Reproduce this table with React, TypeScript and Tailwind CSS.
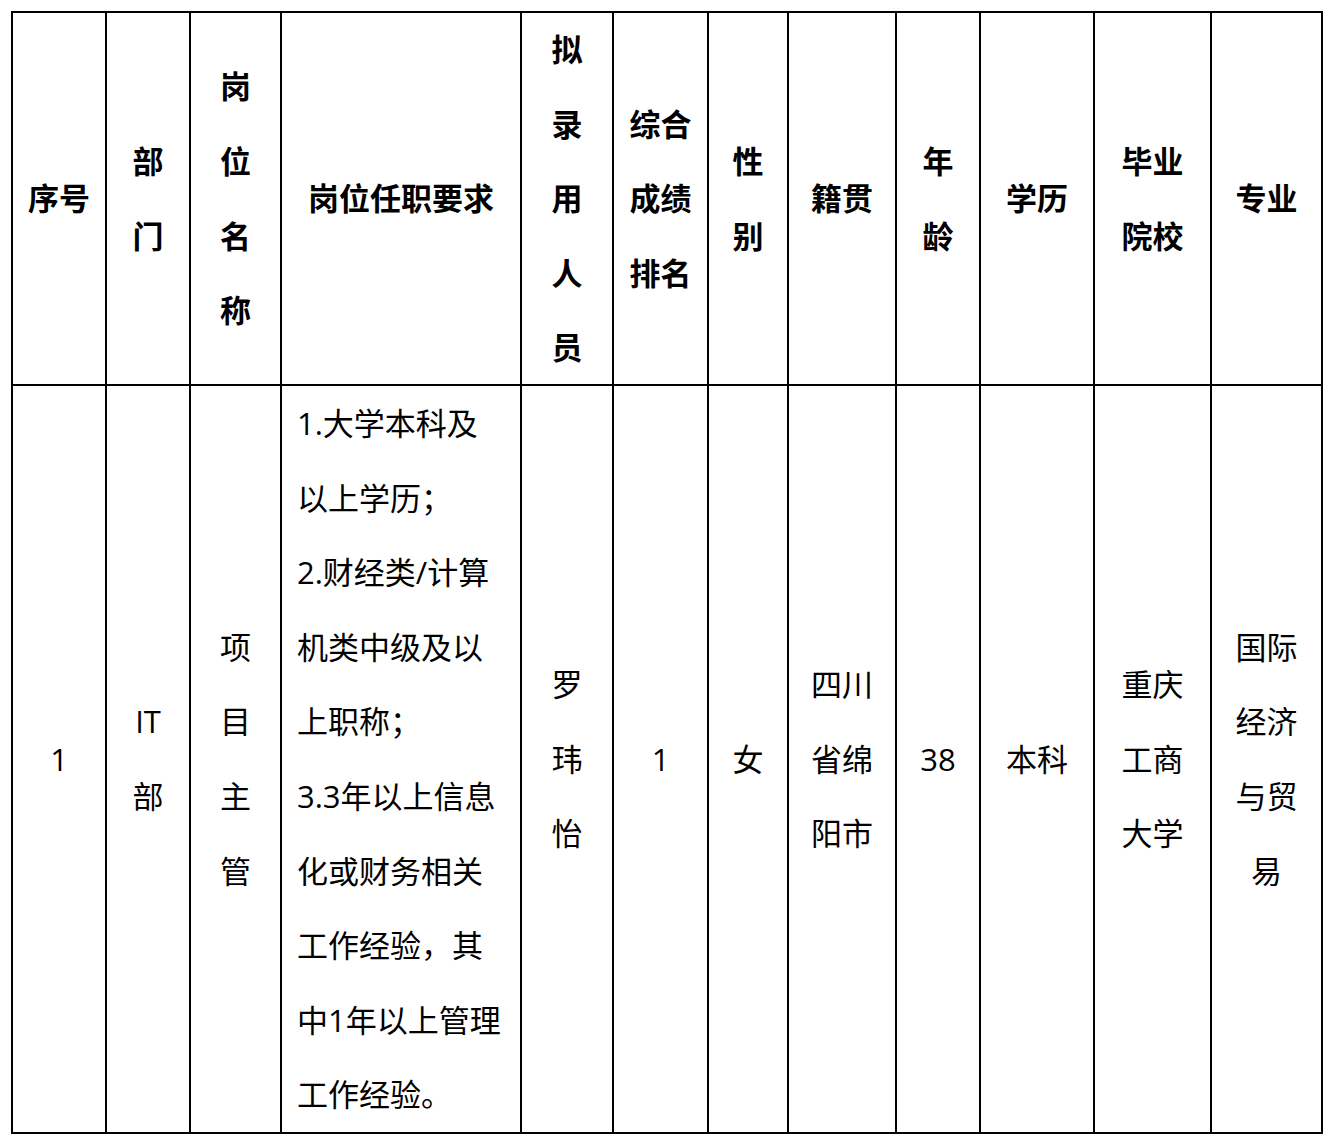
const font = {
  fontFamily: '"Open Sans", "Noto Sans CJK SC", sans-serif',
};

type Cell = { lines: string[]; left?: boolean };

const header: Cell[] = [
  { lines: ['序号'] },
  { lines: ['部', '门'] },
  { lines: ['岗', '位', '名', '称'] },
  { lines: ['岗位任职要求'] },
  { lines: ['拟', '录', '用', '人', '员'] },
  { lines: ['综合', '成绩', '排名'] },
  { lines: ['性', '别'] },
  { lines: ['籍贯'] },
  { lines: ['年', '龄'] },
  { lines: ['学历'] },
  { lines: ['毕业', '院校'] },
  { lines: ['专业'] },
];

const row: Cell[] = [
  { lines: ['1'] },
  { lines: ['IT', '部'] },
  { lines: ['项', '目', '主', '管'] },
  {
    left: true,
    lines: [
      '1.大学本科及',
      '以上学历；',
      '2.财经类/计算',
      '机类中级及以',
      '上职称；',
      '3.3年以上信息',
      '化或财务相关',
      '工作经验，其',
      '中1年以上管理',
      '工作经验。',
    ],
  },
  { lines: ['罗', '玮', '怡'] },
  { lines: ['1'] },
  { lines: ['女'] },
  { lines: ['四川', '省绵', '阳市'] },
  { lines: ['38'] },
  { lines: ['本科'] },
  { lines: ['重庆', '工商', '大学'] },
  { lines: ['国际', '经济', '与贸', '易'] },
];

function TableCell({ cell, bold }: { cell: Cell; bold?: boolean }) {
  return (
    <div
      className={`flex items-center border-r-2 border-b-2 border-black overflow-hidden ${
        cell.left ? 'justify-start pl-[15px]' : 'justify-center'
      }`}
    >
      <div
        className={`leading-[74.6px] text-[31px] text-black whitespace-nowrap ${
          cell.left ? 'text-left' : 'text-center'
        } ${bold ? 'font-bold' : 'font-normal'}`}
      >
        {cell.lines.map((line, i) => (
          <div key={i}>{line}</div>
        ))}
      </div>
    </div>
  );
}

export default function App() {
  return (
    <div className="w-[1333px] h-[1139px] bg-white" style={font}>
      <div className="pt-[11px] pl-[11px]">
        <div className="grid w-[1312px] grid-cols-[94px_84px_91px_240px_92px_95px_80px_108px_84px_114px_117px_111px] grid-rows-[373px_748px] border-l-2 border-t-2 border-black">
          {header.map((c, i) => (
            <TableCell key={`h${i}`} cell={c} bold />
          ))}
          {row.map((c, i) => (
            <TableCell key={`r${i}`} cell={c} />
          ))}
        </div>
      </div>
    </div>
  );
}
